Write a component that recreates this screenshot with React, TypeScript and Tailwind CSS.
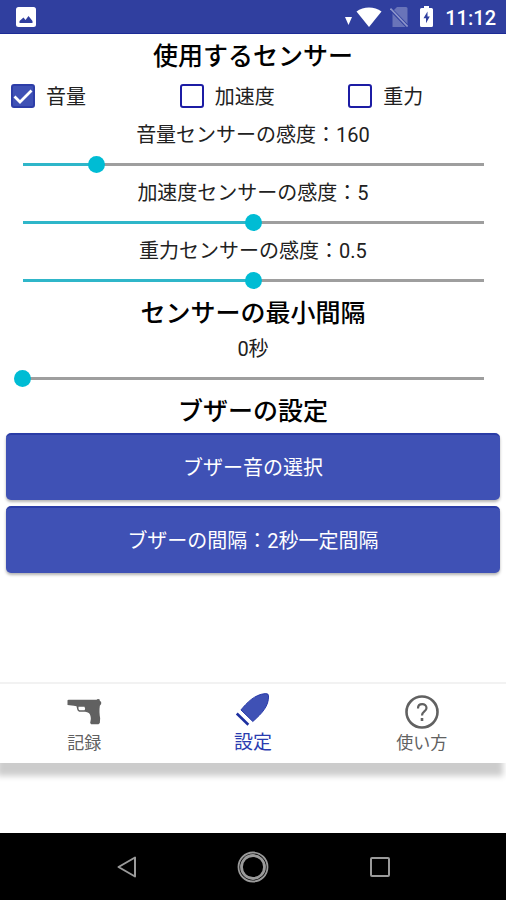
import { useState, type ReactNode } from "react";
import clsx from "clsx";

const StatusBar = () => (
  <header className="flex h-[34px] items-center border-b border-[#1c2b96] bg-[#303f9f] pl-4 pr-[10px] text-white">
    <svg width="20" height="20" viewBox="0 0 20 20" aria-hidden="true">
      <rect width="20" height="20" rx="2.5" fill="currentColor" />
      <path d="M3.500 16V14L7.500 10.500l2 2.500 3-4 4 5v2z" fill="#303f9f" />
    </svg>
    <div className="ml-auto flex items-center">
      <svg width="7" height="8" viewBox="0 0 7 8" className="mr-1 mt-2" aria-hidden="true">
        <path d="M0 0h7L3.500 8z" fill="currentColor" />
      </svg>
      <svg width="26" height="20" viewBox="0 0 26 20" aria-hidden="true">
        <path d="M.5 4.500C7.500-1 18.500-1 25.500 4.500L13 20z" fill="currentColor" />
      </svg>
      <svg width="18" height="20" viewBox="0 0 18 20" className="ml-2" aria-hidden="true">
        <path d="M7 0h9q1.500 0 1.500 1.500V20H2.500V4.500z" fill="#fff" opacity=".28" />
        <path d="M0 1.500 17.500 19.500" stroke="#303f9f" strokeWidth="3.500" />
        <path d="M.5 1.500 17.500 19.500" stroke="#fff" strokeWidth="1.600" opacity=".45" />
      </svg>
      <svg width="13" height="21" viewBox="0 0 13 21" className="ml-3" aria-hidden="true">
        <path
          d="M4 0h5v2h2.500q1.500 0 1.500 1.500v16q0 1.500-1.500 1.500h-10Q0 21 0 19.500v-16Q0 2 1.500 2H4z"
          fill="currentColor"
        />
        <path d="M7.500 5.500 3.500 12.300h2.500v5l3.800-6.800H7.500z" fill="#303f9f" />
      </svg>
      <time className="ml-3 pt-0.5 text-[20px] font-medium leading-6">11:12</time>
    </div>
  </header>
);

const SectionTitle = ({ children }: { children: ReactNode }) => (
  <h2 className="pt-1.5 text-center text-[25px] font-medium leading-[34px] text-black">
    {children}
  </h2>
);

type SensorCheckProps = {
  label: string;
  defaultChecked?: boolean;
};

const SensorCheck = ({ label, defaultChecked }: SensorCheckProps) => (
  <label className="flex items-center gap-[11px] pl-[11px] text-[20px] leading-6">
    <span className="relative size-6 shrink-0">
      <input
        type="checkbox"
        defaultChecked={defaultChecked}
        className="peer block size-6 appearance-none rounded-[3px] border-2 border-[#1c1ca4] bg-white checked:border-[#2d3da8] checked:bg-[#3f51b5]"
      />
      <svg
        viewBox="0 0 24 24"
        className="pointer-events-none absolute inset-0 hidden size-6 text-white peer-checked:block"
        aria-hidden="true"
      >
        <path d="M3.500 12.500 9 18 20.500 6.500" fill="none" stroke="currentColor" strokeWidth="2.800" />
      </svg>
    </span>
    <span className="pt-[3px]">{label}</span>
  </label>
);

type SettingSliderProps = {
  id: string;
  format: (value: number) => string;
  initial: number;
  max: number;
  step: number;
};

const SettingSlider = ({ id, format, initial, max, step }: SettingSliderProps) => {
  const [value, setValue] = useState(initial);
  const percent = (value / max) * 100;

  return (
    <div>
      <label htmlFor={id} className="block text-center text-[20px] leading-[37px]">
        {format(value)}
      </label>
      <div className="px-[14px]">
        <input
          id={id}
          type="range"
          min={0}
          max={max}
          step={step}
          value={value}
          onChange={(e) => setValue(Number(e.target.value))}
          className="block h-[21px] w-full appearance-none bg-transparent bg-[length:calc(100%-17px)_3px] bg-center bg-no-repeat [&::-webkit-slider-thumb]:size-[17px] [&::-webkit-slider-thumb]:appearance-none [&::-webkit-slider-thumb]:rounded-full [&::-webkit-slider-thumb]:bg-[#00bcd4]"
          style={{
            backgroundImage: `linear-gradient(to right, #2fb6c9 ${percent}%, #9e9e9e ${percent}%)`,
          }}
        />
      </div>
    </div>
  );
};

const BuzzerButton = ({ children }: { children: ReactNode }) => (
  <button
    type="button"
    className="h-[67px] w-full rounded-[5px] border-t-2 border-[#2a3ca6] bg-[#3f51b5] text-[20px] text-white shadow-[0_2px_3px_rgba(0,0,0,0.3)]"
  >
    {children}
  </button>
);

const PistolIcon = () => (
  <svg width="35" height="26" viewBox="0 0 104 78" aria-hidden="true">
    <path
      fillRule="evenodd"
      d="M1 4 4 2 88 2 92 0 97 1 98 5 102 9V15L98 20C96 32 97 48 99 58L98 72 94 76H72L69 72 71 60C71 52 69 46 65 42L60 40 54 38H36Q31 37 30 31L28 22 20 20 1 18zM34 23Q33 33 38 34H52L54 30 52 23z"
      fill="currentColor"
    />
  </svg>
);

const BulletIcon = () => (
  <svg width="35" height="34" viewBox="0 0 108 106" aria-hidden="true">
    <path
      d="M18 56C36 34 60 8 94 5Q104 4 104 12C105 44 84 66 55 92z"
      fill="#3f51b5"
      stroke="#2537a8"
      strokeWidth="3"
    />
    <path d="M5 67 41 102" stroke="#1c2fa0" strokeWidth="8" />
  </svg>
);

const HelpIcon = () => (
  <svg width="34" height="34" viewBox="0 0 34 34" fill="none" stroke="currentColor" aria-hidden="true">
    <circle cx="17" cy="17" r="15.500" strokeWidth="2.600" />
    <path
      d="M13 13.500C13 7.500 21.500 8 21.500 13C21.500 16.500 17 16.500 17 20.500"
      strokeWidth="2.200"
    />
    <path d="M17 23v3" strokeWidth="2.600" />
  </svg>
);

type TabProps = {
  label: string;
  icon: ReactNode;
  active?: boolean;
};

const Tab = ({ label, icon, active }: TabProps) => (
  <a
    href="#"
    aria-current={active ? "page" : undefined}
    className={clsx(
      "flex flex-col items-center",
      active ? "pt-2 text-[19px] text-[#2a3cb0]" : "pt-[11px] text-[17px] text-[#616161]",
    )}
  >
    <span className="flex h-[34px] items-center">{icon}</span>
    <span className={active ? "leading-[34px]" : "leading-[28px]"}>{label}</span>
  </a>
);

const SystemNav = () => (
  <footer className="grid h-[67px] grid-cols-3 items-center justify-items-center bg-black px-16 text-[#9a9a9a]">
    <button type="button" aria-label="戻る">
      <svg width="32" height="32" viewBox="0 0 32 32" fill="none" stroke="currentColor" strokeWidth="2">
        <path d="M24 6.500v19L7.500 16z" strokeLinejoin="round" />
      </svg>
    </button>
    <button type="button" aria-label="ホーム">
      <svg width="32" height="32" viewBox="0 0 32 32" fill="none" stroke="currentColor">
        <circle cx="16" cy="16" r="14.500" strokeWidth="1.800" />
        <circle cx="16" cy="16" r="11.500" strokeWidth="2.800" />
      </svg>
    </button>
    <button type="button" aria-label="アプリ履歴">
      <svg width="32" height="32" viewBox="0 0 32 32" fill="none" stroke="currentColor" strokeWidth="2">
        <rect x="8" y="7" width="18" height="18" rx="1" />
      </svg>
    </button>
  </footer>
);

const App = () => {
  return (
    <div className="flex min-h-screen flex-col bg-white font-[Roboto,'Noto_Sans_CJK_JP',sans-serif] text-[#212121]">
      <StatusBar />

      <main className="flex-1">
        <SectionTitle>使用するセンサー</SectionTitle>
        <div className="grid h-[43px] grid-cols-3 items-center">
          <SensorCheck label="音量" defaultChecked />
          <SensorCheck label="加速度" />
          <SensorCheck label="重力" />
        </div>
        <SettingSlider
          id="volume"
          format={(v) => `音量センサーの感度：${v}`}
          initial={160}
          max={1000}
          step={10}
        />
        <SettingSlider
          id="acceleration"
          format={(v) => `加速度センサーの感度：${v}`}
          initial={5}
          max={10}
          step={1}
        />
        <SettingSlider
          id="gravity"
          format={(v) => `重力センサーの感度：${v}`}
          initial={0.5}
          max={1}
          step={0.1}
        />

        <SectionTitle>センサーの最小間隔</SectionTitle>
        <SettingSlider id="interval" format={(v) => `${v}秒`} initial={0} max={60} step={1} />

        <SectionTitle>ブザーの設定</SectionTitle>
        <div className="flex flex-col gap-1.5 px-1.5 pt-1">
          <BuzzerButton>ブザー音の選択</BuzzerButton>
          <BuzzerButton>ブザーの間隔：2秒一定間隔</BuzzerButton>
        </div>
      </main>

      <nav className="mb-[70px] grid h-[81px] grid-cols-3 items-start border-t-2 border-[#f2f2f2] bg-white shadow-[-3px_13px_6px_rgba(0,0,0,0.2)]">
        <Tab label="記録" icon={<PistolIcon />} />
        <Tab label="設定" icon={<BulletIcon />} active />
        <Tab label="使い方" icon={<HelpIcon />} />
      </nav>

      <SystemNav />
    </div>
  );
};

export default App;
